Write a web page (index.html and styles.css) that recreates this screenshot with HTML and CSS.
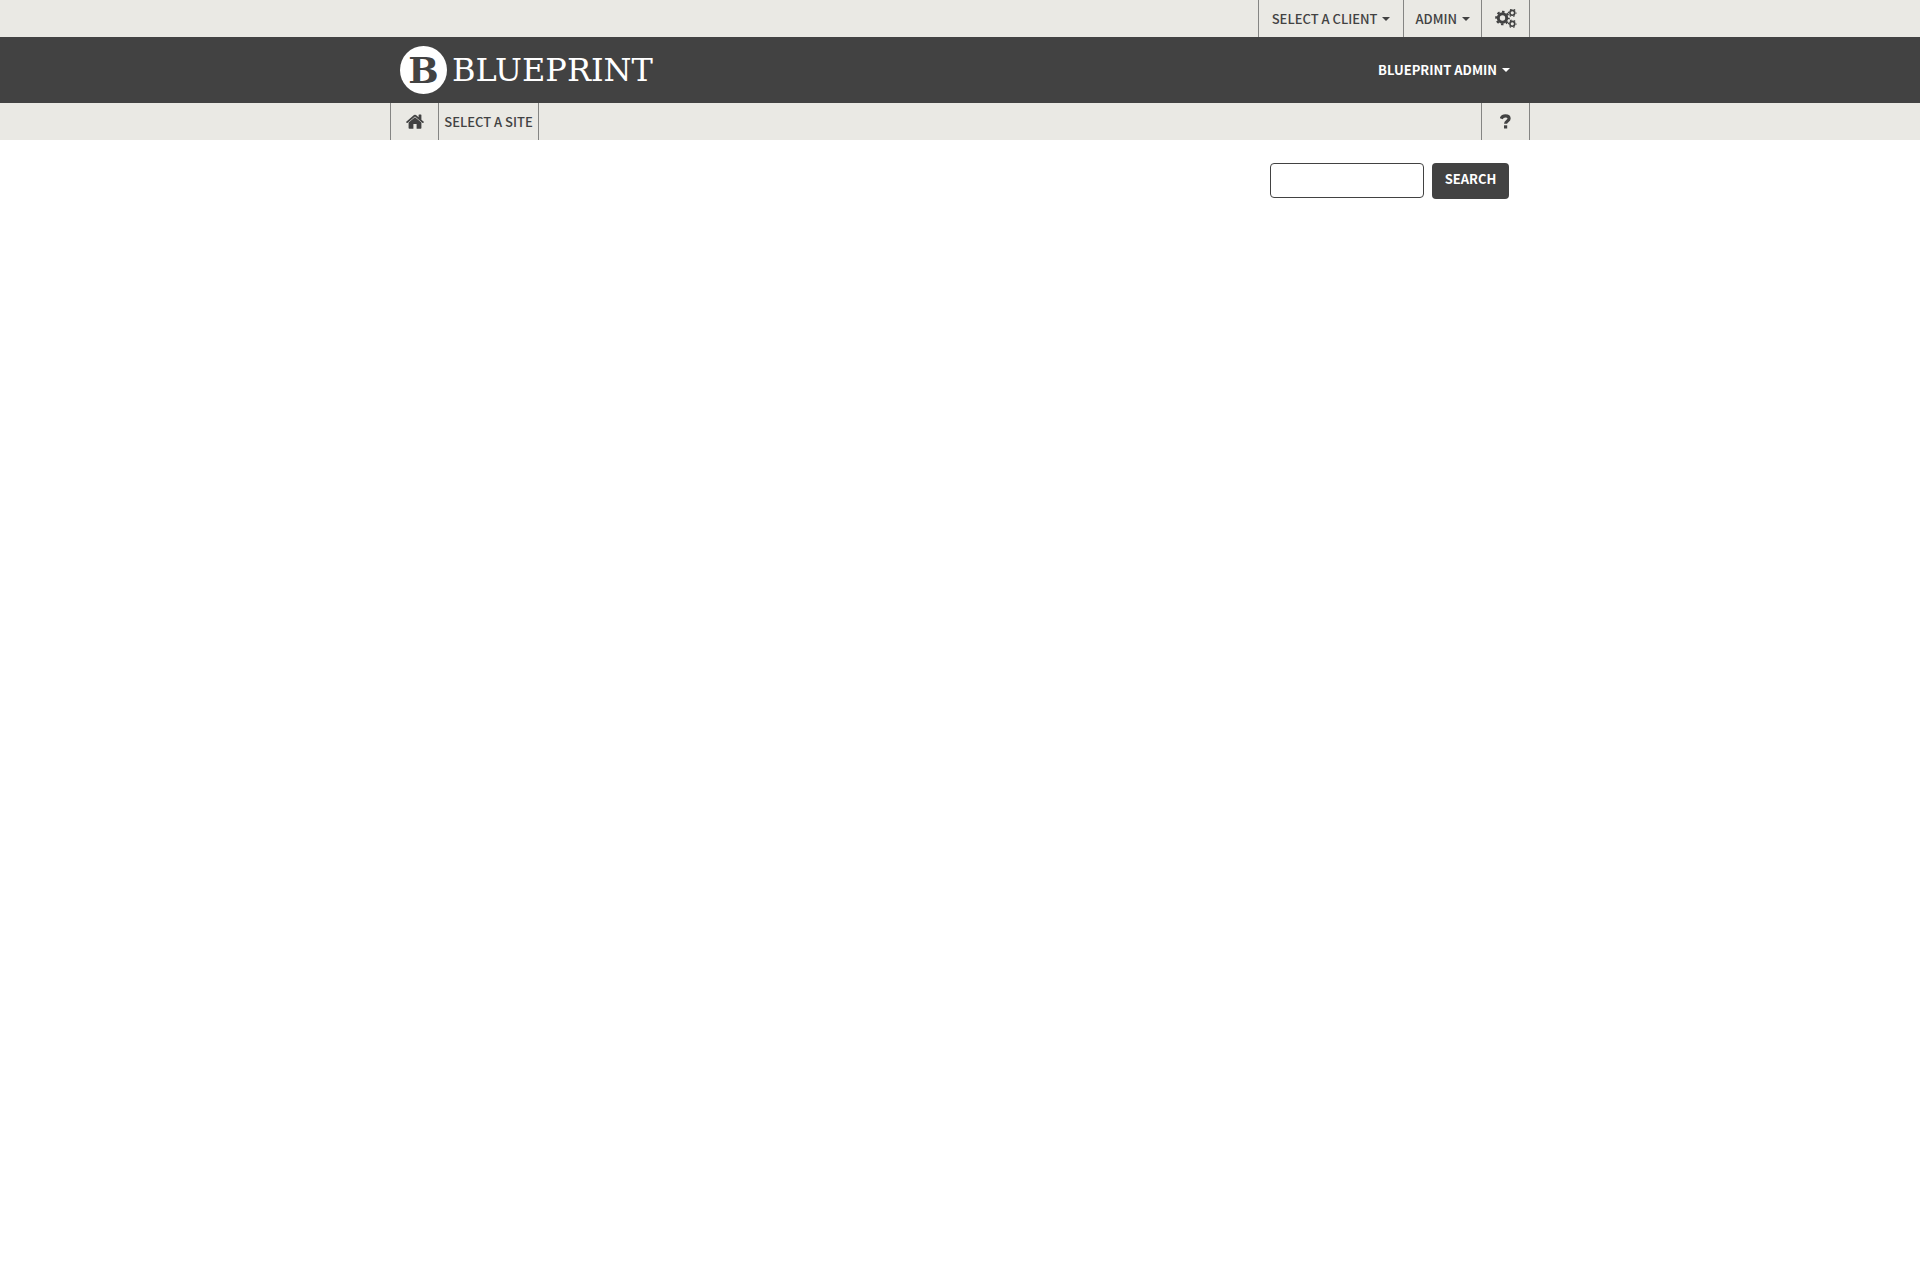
FILE: index.html
```html
<!DOCTYPE html>
<html lang="en">
<head>
<meta charset="utf-8">
<meta name="viewport" content="width=device-width, initial-scale=1">
<title>Blueprint</title>
<link rel="stylesheet" href="styles.css">
</head>
<body>
<nav class="bar" aria-label="Administration">
  <div class="container bar-row bar-end">
    <button class="item client" type="button">SELECT A CLIENT<span class="caret"></span></button>
    <button class="item admin" type="button">ADMIN<span class="caret"></span></button>
    <a class="item square last" href="#settings" aria-label="Settings">
      <svg class="gears" viewBox="0 0 22 20" aria-hidden="true">
        <g fill="none" stroke="currentColor">
          <circle cx="7.5" cy="9" r="4.2" stroke-width="3"/>
          <circle cx="7.5" cy="9" r="6.3" stroke-width="2" stroke-dasharray="2.5 2.448" stroke-dashoffset="1.25"/>
          <circle cx="17.3" cy="3.8" r="2.4" stroke-width="1.6"/>
          <circle cx="17.3" cy="3.8" r="3.7" stroke-width="1.2" stroke-dasharray="1.6 2.275" stroke-dashoffset=".8"/>
          <circle cx="17.3" cy="14.8" r="2.4" stroke-width="1.6"/>
          <circle cx="17.3" cy="14.8" r="3.7" stroke-width="1.2" stroke-dasharray="1.6 2.275" stroke-dashoffset=".8"/>
        </g>
      </svg>
    </a>
  </div>
</nav>
<header class="masthead">
  <div class="container masthead-row">
    <a class="brand" href="#home"><span class="emblem" aria-hidden="true">B</span><span class="wordmark">BLUEPRINT</span></a>
    <button class="account" type="button">BLUEPRINT ADMIN<span class="caret"></span></button>
  </div>
</header>
<nav class="bar" aria-label="Site">
  <div class="container bar-row">
    <a class="item square" href="#home" aria-label="Home">
      <svg class="house" viewBox="0 0 18 16" aria-hidden="true">
        <path fill="currentColor" d="M9 3.2 15.4 8.5V14a.8.8 0 0 1-.8.8h-4V10H7.4v4.8h-4a.8.8 0 0 1-.8-.8V8.5z"/>
        <path fill="currentColor" d="M17.8 7.7 15.4 5.7V1a.4.4 0 0 0-.4-.4h-2a.4.4 0 0 0-.4.4v2.300L10 1.100a1.600 1.600 0 0 0-2 0L.2 7.700a.4.4 0 0 0 0 .5l.6.7a.4.4 0 0 0 .6 0L9 2.500l7.600 6.400a.4.4 0 0 0 .6 0l.6-.7a.4.4 0 0 0 0-.5z"/>
      </svg>
    </a>
    <a class="item site" href="#sites">SELECT A SITE</a>
    <a class="item square last help" href="#help" aria-label="Help">
      <svg class="question" viewBox="0 0 11 16" aria-hidden="true">
        <path fill="none" stroke="currentColor" stroke-width="3.2" d="M1.200 4.700C1.900 2.700 3.400 1.900 5.400 1.900c2 0 3.700 1 3.700 2.700 0 2.400-3.500 2.300-3.500 5.200"/>
        <path fill="currentColor" d="M4 11.300h3.200v3.200H4z"/>
      </svg>
    </a>
  </div>
</nav>
<main class="container">
  <form class="search" role="search">
    <input class="search-box" type="text" aria-label="Search">
    <button class="search-button" type="submit">SEARCH</button>
  </form>
</main>
</body>
</html>
```
FILE: styles.css
```css
* {
  box-sizing: border-box;
}

body {
  margin: 0;
  background: #fff;
  color: #424242;
  font-family: "Source Sans Pro", "Noto Sans CJK SC", sans-serif;
  font-size: 13px;
  font-weight: 500;
  line-height: 20px;
}

button {
  border: 0;
  background: none;
  color: inherit;
  font: inherit;
  cursor: pointer;
}

a {
  color: inherit;
  text-decoration: none;
}

svg {
  display: block;
}

.container {
  max-width: 1140px;
  margin: 0 auto;
}

.bar {
  background: #eae9e4;
}

.bar-row {
  display: flex;
  min-height: 37px;
}

.bar-end {
  justify-content: flex-end;
}

.item {
  display: flex;
  align-items: center;
  border-left: 1px solid #858583;
  padding: 0 11px;
}

.client {
  padding: 0 13px;
}

.square {
  width: 48px;
  justify-content: center;
  padding: 0;
}

.last {
  width: 49px;
  border-right: 1px solid #858583;
}

.site {
  width: 101px;
  justify-content: center;
  padding: 0;
  border-right: 1px solid #858583;
}

.help {
  margin-left: auto;
}

.caret {
  margin-left: 5px;
  border: 4px solid transparent;
  border-top-color: currentColor;
  border-bottom: 0;
}

.gears {
  width: 22px;
  height: 20px;
}

.house {
  width: 18px;
  height: 16px;
}

.question {
  width: 11px;
  height: 16px;
}

.masthead {
  background: #424242;
  color: #fff;
}

.masthead-row {
  display: flex;
  align-items: center;
  justify-content: space-between;
  min-height: 66px;
  padding: 0 20px 0 10px;
}

.brand {
  display: flex;
  align-items: center;
  gap: 5px;
  font-family: "DejaVu Serif", serif;
  line-height: 48px;
}

.emblem {
  display: flex;
  align-items: center;
  justify-content: center;
  width: 47px;
  height: 48px;
  border-radius: 50%;
  background: #fff;
  color: #424242;
  font-size: 36px;
  font-weight: 700;
}

.wordmark {
  font-size: 32px;
  font-weight: 400;
}

.account {
  display: flex;
  align-items: center;
  padding: 0;
  font-weight: 700;
}

.search {
  display: flex;
  justify-content: flex-end;
  gap: 8px;
  padding: 23px 21px;
}

.search-box {
  width: 154px;
  height: 35px;
  border: 1px solid #424242;
  border-radius: 4px;
  padding: 0 8px;
  font: inherit;
}

.search-button {
  width: 77px;
  height: 36px;
  border-radius: 4px;
  padding: 0 0 4px;
  background: #424242;
  color: #fff;
  font-weight: 700;
}
```
